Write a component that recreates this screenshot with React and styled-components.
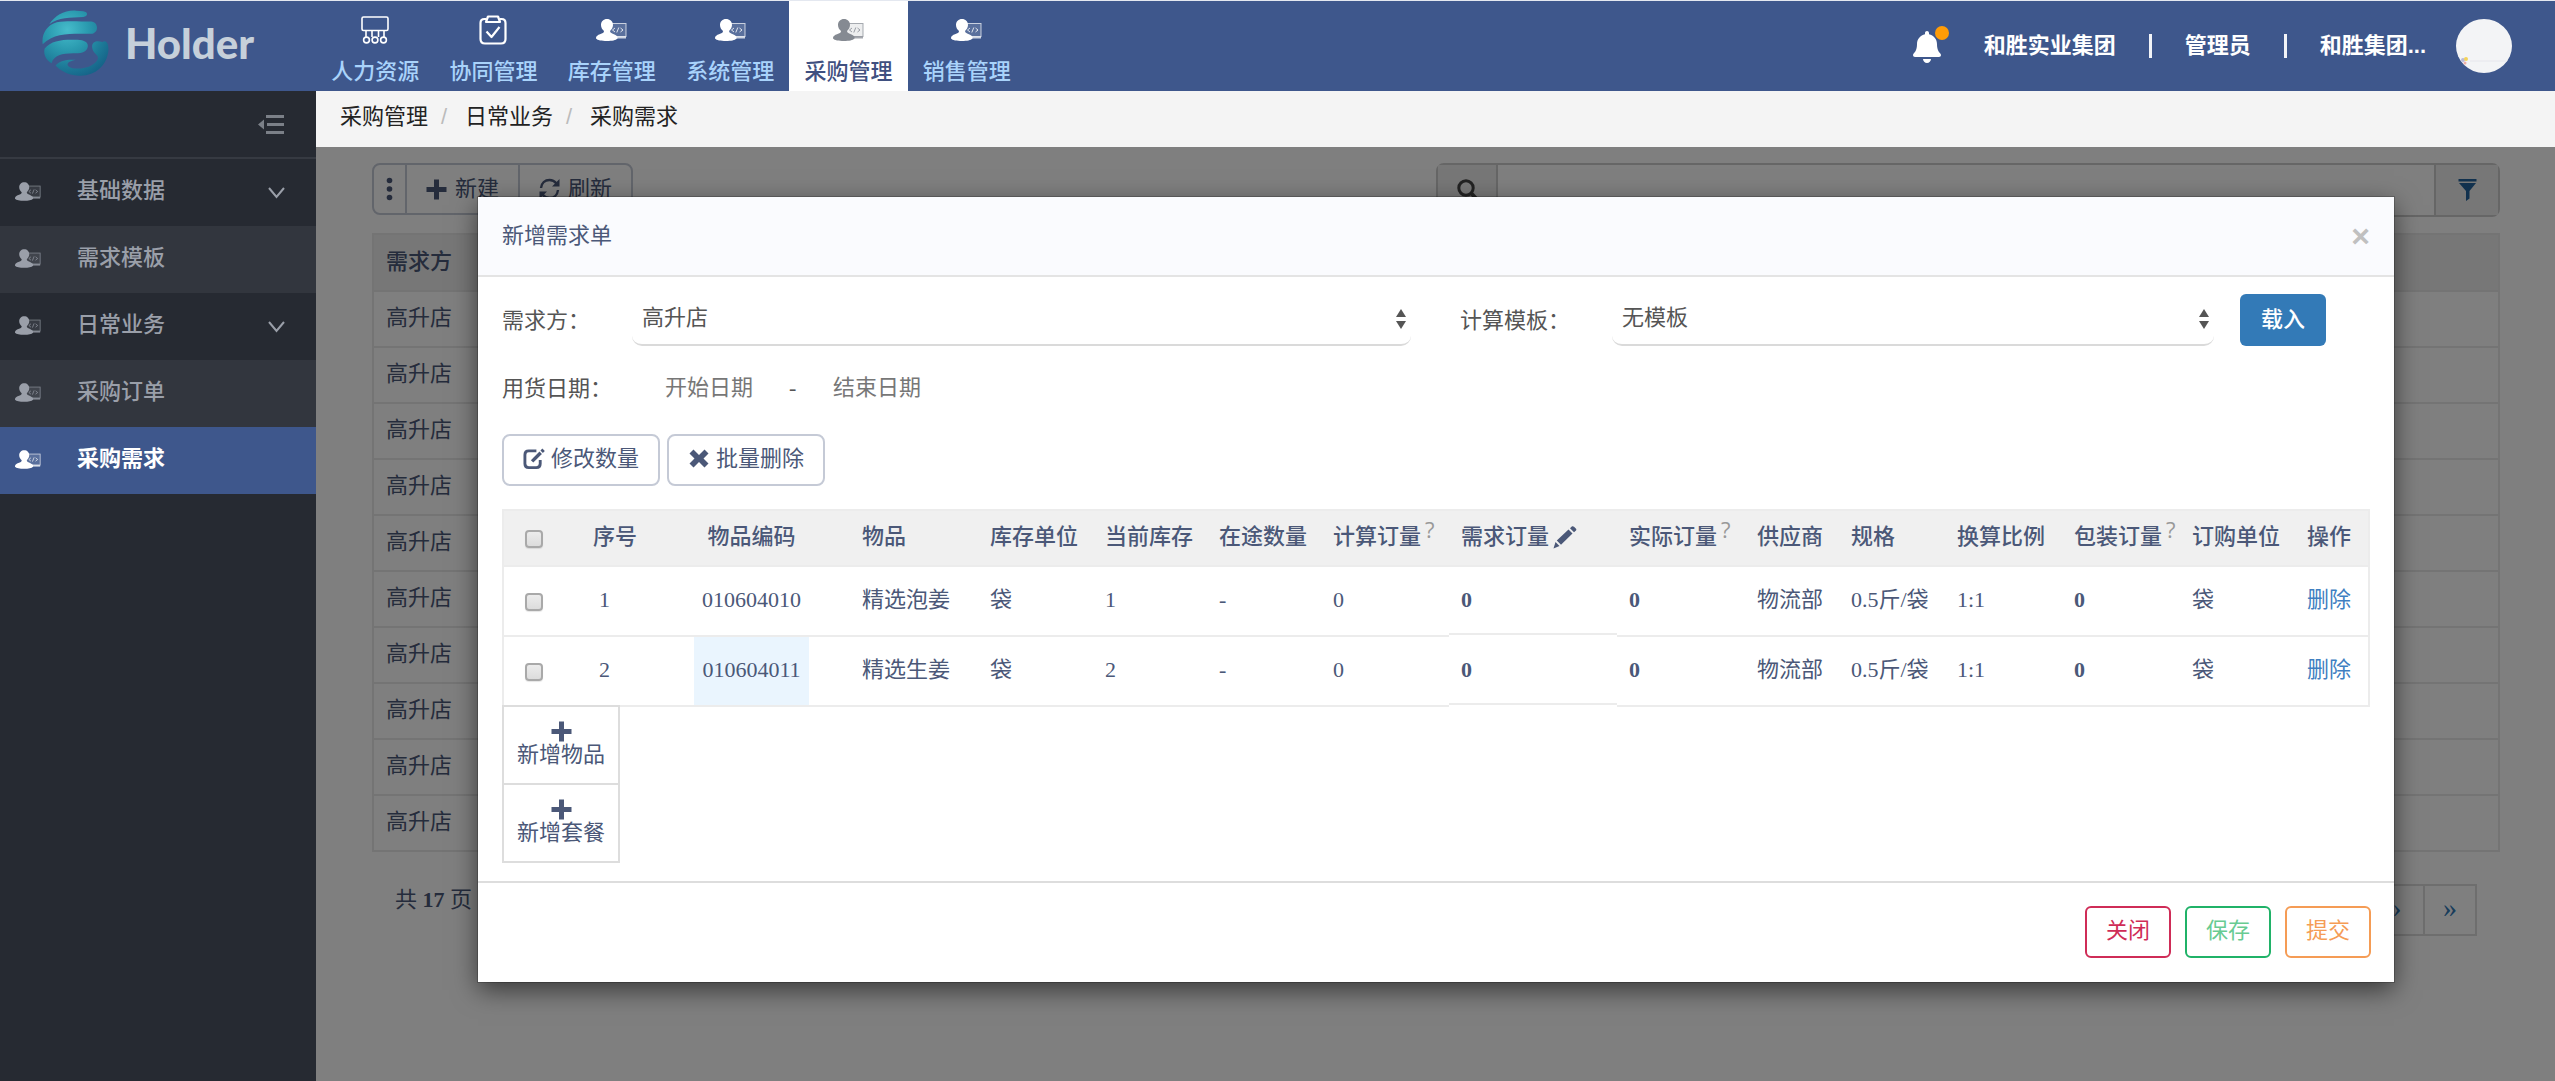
import React from "react";
import styled, { createGlobalStyle, css } from "styled-components";
import { FaBell } from "react-icons/fa";

const sans = `"Liberation Sans", "Noto Sans CJK SC", sans-serif`;
const serif = `"Liberation Serif", "Noto Sans CJK SC", serif`;
const ink = "#4b5878";
const blue = "#3e578c";

const GlobalStyle = createGlobalStyle`
  *, *::before, *::after { box-sizing: border-box; }
  body { margin: 0; font-family: ${sans}; font-size: 22px; line-height: 32px; color: #333; }
  button, input, select { font: inherit; color: inherit; margin: 0; }
  button { cursor: pointer; }
  a { color: inherit; text-decoration: none; }
  svg { display: block; flex: none; }
`;

/* ---------- page frame ---------- */
const Page = styled.div`
  min-height: 100vh;
  display: flex;
  flex-direction: column;
`;
const Header = styled.header`
  height: 91px;
  display: flex;
  background: ${blue};
  border-top: 1px solid #e4e8f0;
  white-space: nowrap;
`;
const Brand = styled.a`
  width: 316px;
  padding-left: 42px;
  padding-bottom: 6px;
  display: flex;
  align-items: center;
  gap: 16px;
  font-family: "Lato", sans-serif;
  font-weight: 900;
  font-size: 42px;
  line-height: 48px;
  color: #c6d0da;
`;
const Nav = styled.nav`
  width: 710px;
  display: flex;
`;
const NavItem = styled.a`
  flex: 1;
  padding-top: 12px;
  display: flex;
  flex-direction: column;
  align-items: center;
  gap: 9px;
  font-weight: 500;
  color: ${(p) => (p.$active ? "#3f5080" : "#a9d3fb")};
  background: ${(p) => (p.$active ? "#fff" : "transparent")};
`;
const NavIcon = styled.span`
  height: 34px;
  display: flex;
  align-items: center;
  color: ${(p) => (p.$active ? "#858a92" : "#fff")};
`;
const Account = styled.div`
  margin-left: auto;
  padding-right: 43px;
  display: flex;
  align-items: center;
  color: #fff;
  font-weight: 700;
`;
const BellButton = styled.button`
  position: relative;
  margin-right: 41px;
  padding: 2px 0 0;
  border: 0;
  background: none;
  color: #fff;
`;
const Dot = styled.span`
  position: absolute;
  top: -3px;
  right: -6px;
  width: 14px;
  height: 14px;
  border-radius: 50%;
  background: #ff9c07;
`;
const Divider = styled.span`
  width: 3px;
  height: 24px;
  margin: 0 33px;
  background: #f2f4f8;
`;
const Avatar = styled.span`
  width: 56px;
  height: 54px;
  margin-left: 30px;
  padding: 38px 0 0 5px;
  border-radius: 50%;
  overflow: hidden;
  background: #f3f4f6;
`;
const Body = styled.div`
  flex: 1;
  display: flex;
`;

/* ---------- sidebar ---------- */
const Sidebar = styled.aside`
  width: 316px;
  flex: none;
  background: #262a32;
`;
const Collapse = styled.button`
  width: 100%;
  height: 68px;
  padding: 0 32px 0 0;
  display: flex;
  justify-content: flex-end;
  align-items: center;
  border: 0;
  border-bottom: 2px solid #363a42;
  background: none;
  color: #7b8088;
`;
const SideItem = styled.a`
  height: 67px;
  padding: 0 31px 3px 15px;
  display: flex;
  align-items: center;
  font-weight: 500;
  color: #9a9fa9;
  ${(p) => p.$sub && css`background: #32363e;`}
  ${(p) => p.$active && css`background: ${blue}; color: #fff; font-weight: 700;`}
`;
const SideLabel = styled.span`
  flex: 1;
  margin-left: 36px;
`;

/* ---------- main ---------- */
const Main = styled.main`
  flex: 1;
  min-width: 0;
  display: flex;
  flex-direction: column;
`;
const Breadcrumb = styled.nav`
  height: 56px;
  padding: 0 24px 4px;
  display: flex;
  align-items: center;
  background: #f4f4f4;
  color: #222;
`;
const Slash = styled.span`
  width: 37px;
  padding-left: 13px;
  color: #bbb;
`;
const Stage = styled.div`
  position: relative;
  flex: 1;
  font-family: ${serif};
  color: ${ink};
`;
const Listing = styled.section`
  padding: 16px 55px 0 56px;
`;
const Toolbar = styled.div`
  display: flex;
  justify-content: space-between;
  align-items: flex-start;
`;
const ToolGroup = styled.div`
  display: flex;
  border: 2px solid #c5cad6;
  border-radius: 8px;
`;
const ToolButton = styled.button`
  height: 48px;
  padding: 0 19px;
  display: flex;
  align-items: center;
  gap: 8px;
  border: 0;
  background: none;
  & + & { border-left: 2px solid #c5cad6; }
  &:first-child { padding: 0 12px; }
`;
const SearchBox = styled.div`
  flex: 0 1 1064px;
  height: 54px;
  display: flex;
  border: 2px solid #ccc;
  border-radius: 8px;
`;
const SearchAddon = styled.button`
  width: 58px;
  padding: 0;
  display: grid;
  place-items: center;
  border: 0;
  background: #eee;
  color: ${(p) => (p.$link ? "#23629c" : "#444")};
  ${(p) => p.$link && css`width: 62px;`}
`;
const SearchInput = styled.input`
  flex: 1;
  min-width: 0;
  padding: 0 16px;
  border: 0;
  border-left: 2px solid #ccc;
  border-right: 2px solid #ccc;
  background: #fff;
`;
const ListTable = styled.table`
  width: 100%;
  margin-top: 16px;
  border-collapse: collapse;
  border: 2px solid #e9e9e9;
  th, td {
    height: 56px;
    padding: 0 12px 2px;
    text-align: left;
    font-weight: 400;
    border-bottom: 2px solid #e9e9e9;
  }
  th { height: 57px; background: #eee; font-weight: 500; }
`;
const PagerRow = styled.div`
  display: flex;
  justify-content: space-between;
  align-items: flex-start;
  padding: 32px 23px 0;
`;
const Pages = styled.div`
  display: flex;
  border: 2px solid #ddd;
`;
const PageLink = styled.a`
  width: 52px;
  line-height: 44px;
  padding-bottom: 4px;
  text-align: center;
  font-size: 28px;
  color: #337ab7;
  & + & { border-left: 2px solid #ddd; }
`;

/* ---------- modal ---------- */
const Overlay = styled.div`
  position: absolute;
  inset: 0;
  padding: 50px 161px 0 162px;
  background: rgba(0, 0, 0, 0.5);
`;
const Modal = styled.div`
  background: #fff;
  box-shadow: 0 0 0 1px rgba(0, 0, 0, 0.2), 0 8px 24px rgba(0, 0, 0, 0.55);
`;
const ModalHead = styled.div`
  height: 80px;
  padding: 0 24px;
  display: flex;
  justify-content: space-between;
  align-items: center;
  background: #fafbfe;
  border-bottom: 2px solid #e4e4e4;
`;
const Title = styled.h2`
  margin: 0;
  font-size: 22px;
  line-height: 32px;
  font-weight: 400;
  color: ${ink};
`;
const CloseButton = styled.button`
  padding: 0;
  border: 0;
  background: none;
  color: #c0c0c0;
  font-family: ${sans};
  font-size: 32px;
  line-height: 32px;
  font-weight: 700;
`;
const ModalBody = styled.div`
  padding: 16px 24px 18px;
`;
const FormRow = styled.div`
  height: ${(p) => p.$height}px;
  padding-top: ${(p) => p.$top ?? 0}px;
  display: flex;
  align-items: center;
  color: #555;
`;
const Label = styled.label`
  width: ${(p) => p.$width}px;
  flex: none;
  padding-top: 2px;
`;
const SelectWrap = styled.div`
  position: relative;
  flex: ${(p) => p.$grow} 1 0;
  margin-right: ${(p) => p.$gap}px;
  svg { position: absolute; right: 5px; top: 16px; pointer-events: none; }
`;
const Select = styled.select`
  width: 100%;
  height: 53px;
  padding: 0 10px 2px;
  appearance: none;
  border: 0;
  border-bottom: 2px solid #dadada;
  border-radius: 10px;
  background: #fff;
  outline: 0;
`;
const LoadButton = styled.button`
  width: 86px;
  height: 52px;
  padding: 0;
  margin-right: 44px;
  border: 0;
  border-radius: 6px;
  background: #337ab7;
  color: #fff;
  font-weight: 500;
`;
const DateInput = styled.input`
  width: 96px;
  padding: 0;
  border: 0;
  outline: 0;
  background: none;
  &::placeholder { color: #777; opacity: 1; }
`;
const Dash = styled.span`
  width: 72px;
  padding-left: 28px;
`;
const Actions = styled.div`
  display: flex;
  gap: 7px;
  margin: 19px 0 23px;
`;
const ActionButton = styled.button`
  height: 52px;
  padding: 0 19px 3px;
  display: flex;
  align-items: center;
  gap: 6px;
  border: 2px solid #c5cad6;
  border-radius: 8px;
  background: #fff;
  color: ${ink};
`;
const Grid = styled.table`
  width: 100%;
  table-layout: fixed;
  border-spacing: 0;
  border: 2px solid #ececec;
  border-bottom: 0;
  white-space: nowrap;
  color: ${ink};
`;
const HeadCell = styled.th`
  height: 56px;
  padding: 0 0 2px ${(p) => p.$left ?? 12}px;
  text-align: ${(p) => (p.$center ? "center" : "left")};
  font-weight: 500;
  background: #f0f0f0;
  border-bottom: 2px solid #ececec;
`;
const Cell = styled.td`
  height: 70px;
  padding: 0 0 2px ${(p) => p.$left ?? 12}px;
  text-align: ${(p) => (p.$center ? "center" : "left")};
  font-weight: ${(p) => (p.$bold ? 700 : 400)};
  border-bottom: 2px solid #ececec;
  ${(p) => p.$marked && css`background: #eaf5fe;`}
  ${(p) => p.$editable && css`border-bottom-color: #fff; box-shadow: inset 0 -2px #ececec;`}
`;
const HeadText = styled.span`
  display: flex;
  align-items: center;
  gap: 4px;
`;
const Help = styled.sup`
  align-self: flex-start;
  font-size: 22px;
  line-height: 16px;
  color: #999;
  font-family: "Open Sans", sans-serif;
  font-weight: 400;
`;
const Check = styled.input`
  appearance: none;
  display: block;
  width: 18px;
  height: 18px;
  margin: 4px 0 0;
  border: 2px solid #a9a9a9;
  border-radius: 4px;
  background: linear-gradient(#ececec, #dcdcdc);
  box-shadow: 0 1px 1px rgba(0, 0, 0, 0.1);
`;
const RemoveLink = styled.a`
  color: #3f7fc1;
`;
const AddStack = styled.div`
  width: 118px;
  margin-top: -2px;
  border: 2px solid #ddd;
`;
const AddButton = styled.button`
  width: 100%;
  height: 76px;
  padding: 14px 0 0;
  display: flex;
  flex-direction: column;
  align-items: center;
  justify-content: flex-start;
  border: 0;
  background: #fff;
  color: ${ink};
  line-height: 26px;
  & + & { border-top: 2px solid #ddd; height: 78px; }
`;
const ModalFoot = styled.div`
  padding: 23px 23px 24px;
  display: flex;
  justify-content: flex-end;
  gap: 14px;
  border-top: 2px solid #ddd;
`;
const FootButton = styled.button`
  width: 86px;
  height: 52px;
  padding: 0 0 3px;
  border: 2px solid ${(p) => p.$line};
  border-radius: 6px;
  background: #fff;
  color: ${(p) => p.$text};
`;

/* ---------- icons ---------- */
const Globe = () => (
  <svg width="67" height="66" viewBox="36 30 201 200" aria-hidden="true">
    <defs>
      <radialGradient id="globe" gradientUnits="userSpaceOnUse" cx="112" cy="90" r="150">
        <stop offset="0" stopColor="#46bccb" />
        <stop offset="0.4" stopColor="#2b9bb0" />
        <stop offset="0.75" stopColor="#1d7a98" />
        <stop offset="1" stopColor="#166489" />
      </radialGradient>
    </defs>
    <g fill="url(#globe)">
      <path d="M57 73C74 48 102 30 138 32L160 34C176 36 175 50 160 51C120 53 85 52 57 73Z" />
      <path d="M37 134C33 104 48 76 80 67C108 62 150 65 184 65C208 67 207 101 184 102C130 103 75 96 37 134Z" />
      <path d="M64 191C48 184 38 165 43 147C62 122 98 119 135 120C155 120 174 123 174 139C172 158 155 162 130 161C95 162 72 166 64 191Z" />
      <path d="M187 144C185 124 203 122 218 127C230 120 238 132 236 156C230 200 195 232 146 229C111 227 89 212 76 198C90 183 112 179 137 181C118 185 106 193 116 201C129 211 164 209 183 199C202 188 209 178 202 168C195 161 188 155 187 144Z" />
    </g>
  </svg>
);
const OrgIcon = () => (
  <svg width="28" height="28" viewBox="0 0 28 28" fill="none" stroke="currentColor" strokeWidth="1.6">
    <rect x="1" y="1" width="26" height="13.5" rx="1.5" />
    <path d="M5 14.5V21M11 14.5V21M17.5 14.5V21M23 14.5V21" />
    <circle cx="5.5" cy="24" r="2.9" /><circle cx="14" cy="24" r="2.9" /><circle cx="22.5" cy="24" r="2.9" />
  </svg>
);
const ClipboardIcon = () => (
  <svg width="28" height="30" viewBox="0 0 28 30" fill="none" stroke="currentColor" strokeWidth="2.2" strokeLinejoin="round">
    <path d="M7 4H5.500C3 4 1.500 5.500 1.500 8V24C1.500 27 3 28.500 6 28.500H22C25 28.500 26.500 27 26.500 24V8C26.500 5.500 25 4 22.500 4H21" />
    <path d="M9 1.500H19L21 7H7Z" /><path d="M7.500 16.500L12.500 22L20.500 12" />
  </svg>
);
const OperatorIcon = ({ size = 31 }) => (
  <svg width={size} height={Math.round(size * 0.72)} viewBox="0 0 31 22">
    <rect x="13" y="4.500" width="17" height="13" fill="currentColor" fillOpacity="0.15" stroke="currentColor" strokeOpacity="0.7" strokeWidth="1" />
    <path d="M13 18.500H30" stroke="currentColor" strokeOpacity="0.75" strokeWidth="2" />
    <path d="M19 9L16.500 11L19 13M24.500 9L27 11L24.500 13M22.800 8.500L20.800 13.500" fill="none" stroke="currentColor" strokeOpacity="0.8" />
    <path d="M11 0C14.500 0 17 2.500 17 6C17 8.500 15.500 10.500 14 12C14 14 16 14.300 18.500 15.500C21 16.800 22 18 21.500 19.500C20 21.300 16 22 11 22C5.500 22 1.500 21.300 0 19.500C-.3 17.500 1.500 16 4 15.200C6.500 14.300 8 14 8 12C6.300 10.500 5 8.500 5 6C5 2.500 7.500 0 11 0Z" fill="currentColor" />
  </svg>
);
const CollapseIcon = () => (
  <svg width="26" height="21" viewBox="0 0 26 21" fill="currentColor">
    <path d="M8 1H26V4H8ZM9 9H26V12H9ZM8 17H26V20H8ZM0 10.500L6 5.500V15.500Z" />
  </svg>
);
const Chevron = () => (
  <svg width="17" height="16" viewBox="0 0 17 16" fill="none" stroke="#9a9fa9" strokeWidth="2">
    <path d="M1 5L8.500 14L16 5" />
  </svg>
);
const DotsIcon = () => (
  <svg width="7" height="24" viewBox="0 0 7 24" fill="currentColor">
    <circle cx="3.500" cy="3.500" r="2.800" /><circle cx="3.500" cy="12" r="2.800" /><circle cx="3.500" cy="20.500" r="2.800" />
  </svg>
);
const PlusIcon = () => (
  <svg width="21" height="21" viewBox="0 0 21 21" fill="currentColor">
    <path d="M8 0.500H13V8H20.500V13H13V20.500H8V13H0.500V8H8Z" />
  </svg>
);
const RefreshIcon = () => (
  <svg width="21" height="22" viewBox="0 0 21 22" fill="none" stroke="currentColor" strokeWidth="2.400">
    <path d="M2 10C2.500 5 6 2 10.500 2C13.500 2 15.500 3 17.500 5.500M19 12C18.500 17 15 20 10.500 20C7.500 20 5.500 19 3.500 16.500" />
    <path d="M20.500 1V8.500H13ZM0.500 21V13.500H8Z" fill="currentColor" stroke="none" />
  </svg>
);
const SearchIcon = () => (
  <svg width="21" height="22" viewBox="0 0 21 22" fill="none" stroke="currentColor" strokeWidth="3">
    <circle cx="9" cy="9" r="7.200" /><path d="M14 14L19.500 20" strokeWidth="4" />
  </svg>
);
const FilterIcon = () => (
  <svg width="19" height="22" viewBox="0 0 19 22" fill="currentColor">
    <path d="M0.500 0H18.500V2.500H0.500ZM1 4H18L11.500 12V19.500L8 22V12Z" />
  </svg>
);
const EditIcon = () => (
  <svg width="22" height="22" viewBox="0 0 23 22" fill="none" stroke="currentColor">
    <path d="M14 2.500H6C3.500 2.500 2 4 2 6.500V16C2 18.500 3.500 20 6 20H14C16.500 20 18 18.500 18 16V12" strokeWidth="3" />
    <path d="M9.500 13.500L18.500 4.500" strokeWidth="3.600" /><path d="M19.500 3.400L21.500 1.400" strokeWidth="3.600" />
  </svg>
);
const RemoveIcon = () => (
  <svg width="22" height="19" viewBox="-1 0 22 19" fill="currentColor">
    <path d="M4.500 0.500L10 6L15.500 0.500L19.500 4.500L14.500 9.500L19.500 14.500L15.500 18.500L10 13L4.500 18.500L0.500 14.500L5.500 9.500L0.500 4.500Z" />
  </svg>
);
const PencilIcon = () => (
  <svg width="24" height="23" viewBox="0 0 24 23" fill="currentColor">
    <path d="M0.500 22.500L2.500 16L6.500 20ZM3.800 14.500L15.500 3.500L19.500 7.500L8 18.800ZM17 2.200L18.800 0.500C19.500 0 20.200 0 21 0.700L22.800 2.500C23.500 3.200 23.500 4 23 4.600L21 6.300Z" />
  </svg>
);
const Arrows = () => (
  <svg width="10" height="20" viewBox="0 0 10 20" fill="#555">
    <path d="M5 0L10 8H0ZM5 20L0 12H10Z" />
  </svg>
);
const Sparkle = () => (
  <svg width="50" height="8" viewBox="0 0 50 8">
    <circle cx="2" cy="3" r="2" fill="#b9b9d8" /><circle cx="5" cy="2" r="2" fill="#f4d35a" /><circle cx="4" cy="6" r="1.500" fill="#f0b0a8" />
    <path d="M9 4H50" stroke="#e6e6ec" />
  </svg>
);

/* ---------- data ---------- */
const navItems = [
  ["人力资源", OrgIcon], ["协同管理", ClipboardIcon], ["库存管理", OperatorIcon],
  ["系统管理", OperatorIcon], ["采购管理", OperatorIcon], ["销售管理", OperatorIcon],
];
const sideItems = [
  { label: "基础数据", open: true },
  { label: "需求模板", sub: true },
  { label: "日常业务", open: true },
  { label: "采购订单", sub: true },
  { label: "采购需求", active: true },
];
const columns = [
  { key: "check", width: 60 },
  { key: "index", title: "序号", width: 130, left: 29, cellLeft: 35 },
  { key: "code", title: "物品编码", width: 115, center: true, left: 0 },
  { key: "name", title: "物品", width: 169, left: 53 },
  { key: "unit", title: "库存单位", width: 115 },
  { key: "stock", title: "当前库存", width: 114 },
  { key: "transit", title: "在途数量", width: 114 },
  { key: "calc", title: "计算订量", width: 128, help: true },
  { key: "need", title: "需求订量", width: 168, bold: true, edit: true },
  { key: "actual", title: "实际订量", width: 128, bold: true, help: true },
  { key: "supplier", title: "供应商", width: 94 },
  { key: "spec", title: "规格", width: 106 },
  { key: "ratio", title: "换算比例", width: 117 },
  { key: "pack", title: "包装订量", width: 118, bold: true, help: true },
  { key: "orderUnit", title: "订购单位", width: 115 },
  { key: "action", title: "操作", width: 73 },
];
const common = {
  unit: "袋", transit: "-", calc: 0, need: 0, actual: 0, supplier: "物流部",
  spec: "0.5斤/袋", ratio: "1:1", pack: 0, orderUnit: "袋",
};
const rows = [
  { ...common, index: 1, code: "010604010", name: "精选泡姜", stock: 1 },
  { ...common, index: 2, code: "010604011", name: "精选生姜", stock: 2, marked: true },
];

function cellContent(column, row) {
  if (column.key === "check") return <Check type="checkbox" aria-label={row.name} />;
  if (column.key === "action") return <RemoveLink href="#">删除</RemoveLink>;
  return row[column.key];
}

function DemandModal() {
  return (
    <Modal role="dialog" aria-labelledby="modal-title">
      <ModalHead>
        <Title id="modal-title">新增需求单</Title>
        <CloseButton type="button">×</CloseButton>
      </ModalHead>
      <ModalBody>
        <FormRow $height={53}>
          <Label htmlFor="party" $width={130}>需求方：</Label>
          <SelectWrap $grow={779} $gap={49}>
            <Select id="party"><option>高升店</option></Select>
            <Arrows />
          </SelectWrap>
          <Label htmlFor="template" $width={152}>计算模板：</Label>
          <SelectWrap $grow={602} $gap={26}>
            <Select id="template"><option>无模板</option></Select>
            <Arrows />
          </SelectWrap>
          <LoadButton type="button">载入</LoadButton>
        </FormRow>
        <FormRow $height={69} $top={14}>
          <Label htmlFor="start" $width={163}>用货日期：</Label>
          <DateInput id="start" placeholder="开始日期" />
          <Dash>-</Dash>
          <DateInput aria-label="结束日期" placeholder="结束日期" />
        </FormRow>
        <Actions>
          <ActionButton type="button"><EditIcon />修改数量</ActionButton>
          <ActionButton type="button"><RemoveIcon />批量删除</ActionButton>
        </Actions>
        <Grid>
          <colgroup>{columns.map((c) => <col key={c.key} width={c.width} />)}</colgroup>
          <thead>
            <tr>
              {columns.map((c) => (
                <HeadCell key={c.key} $center={c.center} $left={c.key === "check" ? 21 : c.left}>
                  {c.key === "check" ? <Check type="checkbox" aria-label="全选" />
                    : c.help || c.edit ? (
                      <HeadText>{c.title}{c.help && <Help>?</Help>}{c.edit && <PencilIcon />}</HeadText>
                    ) : c.title}
                </HeadCell>
              ))}
            </tr>
          </thead>
          <tbody>
            {rows.map((r) => (
              <tr key={r.code}>
                {columns.map((c) => (
                  <Cell
                    key={c.key}
                    $center={c.center}
                    $bold={c.bold}
                    $editable={c.edit}
                    $marked={r.marked && c.key === "code"}
                    $left={c.key === "check" ? 21 : c.cellLeft ?? c.left}
                  >
                    {cellContent(c, r)}
                  </Cell>
                ))}
              </tr>
            ))}
          </tbody>
        </Grid>
        <AddStack>
          <AddButton type="button"><PlusIcon />新增物品</AddButton>
          <AddButton type="button"><PlusIcon />新增套餐</AddButton>
        </AddStack>
      </ModalBody>
      <ModalFoot>
        <FootButton type="button" $line="#cf2c57" $text="#cf2c57">关闭</FootButton>
        <FootButton type="button" $line="#20b268" $text="#68cb92">保存</FootButton>
        <FootButton type="button" $line="#f59c55" $text="#f59c55">提交</FootButton>
      </ModalFoot>
    </Modal>
  );
}

export default function App() {
  return (
    <Page>
      <GlobalStyle />
      <Header>
        <Brand href="#"><Globe />Holder</Brand>
        <Nav>
          {navItems.map(([label, Icon]) => {
            const active = label === "采购管理";
            return (
              <NavItem key={label} href="#" $active={active}>
                <NavIcon $active={active}><Icon /></NavIcon>
                {label}
              </NavItem>
            );
          })}
        </Nav>
        <Account>
          <BellButton type="button" aria-label="通知"><FaBell size={32} /><Dot /></BellButton>
          <span>和胜实业集团</span>
          <Divider />
          <span>管理员</span>
          <Divider />
          <span>和胜集团...</span>
          <Avatar><Sparkle /></Avatar>
        </Account>
      </Header>
      <Body>
        <Sidebar>
          <Collapse type="button" aria-label="收起"><CollapseIcon /></Collapse>
          {sideItems.map((s) => (
            <SideItem key={s.label} href="#" $sub={s.sub} $active={s.active}>
              <OperatorIcon size={26} />
              <SideLabel>{s.label}</SideLabel>
              {s.open && <Chevron />}
            </SideItem>
          ))}
        </Sidebar>
        <Main>
          <Breadcrumb>
            <a href="#">采购管理</a><Slash>/</Slash>
            <a href="#">日常业务</a><Slash>/</Slash>
            <a href="#">采购需求</a>
          </Breadcrumb>
          <Stage>
            <Listing>
              <Toolbar>
                <ToolGroup>
                  <ToolButton type="button" aria-label="更多"><DotsIcon /></ToolButton>
                  <ToolButton type="button"><PlusIcon />新建</ToolButton>
                  <ToolButton type="button"><RefreshIcon />刷新</ToolButton>
                </ToolGroup>
                <SearchBox>
                  <SearchAddon type="button" aria-label="搜索"><SearchIcon /></SearchAddon>
                  <SearchInput aria-label="关键字" />
                  <SearchAddon type="button" aria-label="筛选" $link><FilterIcon /></SearchAddon>
                </SearchBox>
              </Toolbar>
              <ListTable>
                <thead><tr><th>需求方</th></tr></thead>
                <tbody>
                  {Array.from({ length: 10 }, (_, i) => <tr key={i}><td>高升店</td></tr>)}
                </tbody>
              </ListTable>
              <PagerRow>
                <span>共 <b>17</b> 页</span>
                <Pages><PageLink href="#">›</PageLink><PageLink href="#">»</PageLink></Pages>
              </PagerRow>
            </Listing>
            <Overlay><DemandModal /></Overlay>
          </Stage>
        </Main>
      </Body>
    </Page>
  );
}
